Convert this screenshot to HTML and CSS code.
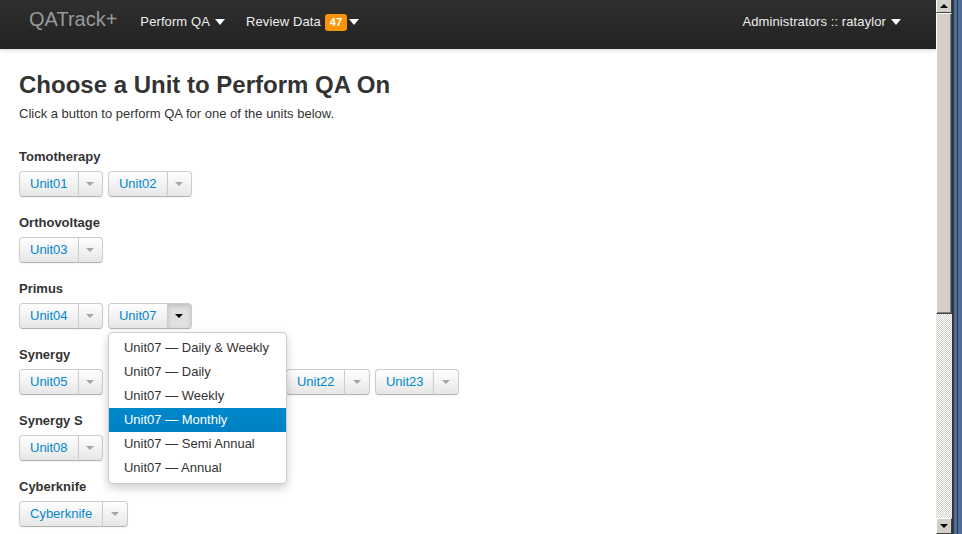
FILE: index.html
```html
<!DOCTYPE html>
<html>
<head>
<meta charset="utf-8">
<title>QATrack+</title>
<link rel="stylesheet" href="styles.css">
</head>
<body>
<div class="window">
  <div class="page">
    <div class="navbar">
      <span class="brand">QATrack+</span>
      <span class="nav-item">Perform QA <span class="nav-caret"></span></span>
      <span class="nav-item">Review Data <span class="badge">47</span><span class="nav-caret tight"></span></span>
      <span class="nav-spacer"></span>
      <span class="nav-item">Administrators :: rataylor <span class="nav-caret"></span></span>
    </div>
    <div class="content">
      <h1>Choose a Unit to Perform QA On</h1>
      <p class="lead">Click a button to perform QA for one of the units below.</p>

      <div class="unit-type">
        <div class="type-label">Tomotherapy</div>
        <div class="btn-row">
          <div class="btn-group"><a class="btn">Unit01</a><a class="btn toggle"><span class="caret"></span></a></div>
          <div class="btn-group"><a class="btn">Unit02</a><a class="btn toggle"><span class="caret"></span></a></div>
        </div>
      </div>

      <div class="unit-type">
        <div class="type-label">Orthovoltage</div>
        <div class="btn-row">
          <div class="btn-group"><a class="btn">Unit03</a><a class="btn toggle"><span class="caret"></span></a></div>
        </div>
      </div>

      <div class="unit-type">
        <div class="type-label">Primus</div>
        <div class="btn-row">
          <div class="btn-group"><a class="btn">Unit04</a><a class="btn toggle"><span class="caret"></span></a></div>
          <div class="btn-group open"><a class="btn">Unit07</a><a class="btn toggle active"><span class="caret dark"></span></a>
            <ul class="dropdown-menu">
              <li>Unit07 — Daily &amp; Weekly</li>
              <li>Unit07 — Daily</li>
              <li>Unit07 — Weekly</li>
              <li class="selected">Unit07 — Monthly</li>
              <li>Unit07 — Semi Annual</li>
              <li>Unit07 — Annual</li>
            </ul>
          </div>
        </div>
      </div>

      <div class="unit-type">
        <div class="type-label">Synergy</div>
        <div class="btn-row">
          <div class="btn-group"><a class="btn">Unit05</a><a class="btn toggle"><span class="caret"></span></a></div>
          <div class="btn-group covered"><a class="btn">Unit06</a><a class="btn toggle"><span class="caret"></span></a></div>
          <div class="btn-group covered"><a class="btn">Unit21</a><a class="btn toggle"><span class="caret"></span></a></div>
          <div class="btn-group"><a class="btn">Unit22</a><a class="btn toggle"><span class="caret"></span></a></div>
          <div class="btn-group"><a class="btn">Unit23</a><a class="btn toggle"><span class="caret"></span></a></div>
        </div>
      </div>

      <div class="unit-type">
        <div class="type-label">Synergy S</div>
        <div class="btn-row">
          <div class="btn-group"><a class="btn">Unit08</a><a class="btn toggle"><span class="caret"></span></a></div>
        </div>
      </div>

      <div class="unit-type">
        <div class="type-label">Cyberknife</div>
        <div class="btn-row">
          <div class="btn-group"><a class="btn">Cyberknife</a><a class="btn toggle"><span class="caret"></span></a></div>
        </div>
      </div>
    </div>
  </div>
  <div class="scrollbar">
    <div class="sb-btn sb-up"><span class="sb-arrow up"></span></div>
    <div class="sb-thumb"></div>
    <div class="sb-track"></div>
    <div class="sb-btn sb-down"><span class="sb-arrow down"></span></div>
  </div>
  <div class="frame"></div>
</div>
</body>
</html>
```
FILE: styles.css
```css
html, body {
  margin: 0;
  padding: 0;
  height: 534px;
  overflow: hidden;
  background: #fff;
}

body {
  font-family: "Liberation Sans", Arial, sans-serif;
  font-size: 13px;
  color: #333;
}

.window {
  display: flex;
  height: 534px;
}

.page {
  width: 936px;
  height: 534px;
  overflow: hidden;
  background: #fff;
  flex: none;
}

/* navbar */
.navbar {
  height: 49px;
  box-sizing: border-box;
  padding: 9px 35px 0 29px;
  display: flex;
  align-items: baseline;
  background: linear-gradient(#2f2f2f, #222);
  box-shadow: 0 1px 4px rgba(0, 0, 0, 0.18);
  position: relative;
}

.brand {
  font-size: 20px;
  line-height: 20px;
  color: #999;
  margin-right: 23px;
}

.nav-item {
  font-size: 13px;
  line-height: 20px;
  color: #eee;
  margin-right: 21px;
  display: inline-flex;
  align-items: center;
  letter-spacing: 0.1px;
}

.nav-item:last-child {
  margin-right: 0;
}

.nav-spacer {
  flex: 1;
}

.nav-caret {
  display: inline-block;
  width: 0;
  height: 0;
  border-top: 6px solid #fff;
  border-left: 5px solid transparent;
  border-right: 5px solid transparent;
  margin-left: 5px;
}

.nav-caret.tight {
  margin-left: 2px;
}

.badge {
  display: inline-block;
  background: #f89406;
  color: #fff;
  font-weight: bold;
  font-size: 11px;
  line-height: 17px;
  padding: 0 5px;
  border-radius: 3px;
  margin-left: 4px;
  letter-spacing: 0;
}

/* content */
.content {
  padding: 21px 19px 0 19px;
}

h1 {
  margin: 0;
  font-size: 24px;
  line-height: 30px;
  font-weight: bold;
  color: #333;
}

.lead {
  margin: 5px 0 0 0;
  line-height: 18px;
}

.unit-type {
  margin-top: 24px;
}

.unit-type + .unit-type {
  margin-top: 16px;
}

.type-label {
  font-weight: bold;
  line-height: 20px;
  margin-bottom: 4px;
}

.btn-row {
  display: flex;
  gap: 5px;
}

.btn-group {
  display: flex;
  position: relative;
}

.btn-group.covered {
  visibility: hidden;
}

.btn {
  display: block;
  box-sizing: border-box;
  height: 26px;
  padding: 3px 10px;
  line-height: 18px;
  font-size: 13px;
  color: #0088cc;
  background: linear-gradient(#fff, #e6e6e6);
  border: 1px solid #ccc;
  border-bottom-color: #b3b3b3;
  border-radius: 4px 0 0 4px;
  box-shadow: inset 0 1px 0 rgba(255, 255, 255, 0.2), 0 1px 2px rgba(0, 0, 0, 0.05);
}

.btn.toggle {
  width: 25.4px;
  padding: 3px 0;
  margin-left: -1px;
  border-radius: 0 4px 4px 0;
  display: flex;
  align-items: center;
  justify-content: center;
}

.btn.toggle.active {
  background: #e0e0e0;
  box-shadow: inset 0 2px 4px rgba(0, 0, 0, 0.15), 0 1px 2px rgba(0, 0, 0, 0.05);
}

.caret {
  display: block;
  width: 0;
  height: 0;
  border-top: 4px solid #a6a6a6;
  border-left: 4px solid transparent;
  border-right: 4px solid transparent;
}

.caret.dark {
  border-top-color: #000;
}

/* dropdown */
.dropdown-menu {
  position: absolute;
  top: 100%;
  left: 0;
  z-index: 10;
  margin: 3px 0 0 0;
  padding: 3px 0;
  list-style: none;
  width: 179px;
  box-sizing: border-box;
  background: #fff;
  border: 1px solid rgba(0, 0, 0, 0.2);
  border-radius: 5px;
  box-shadow: 0 4px 10px rgba(0, 0, 0, 0.2);
}

.dropdown-menu li {
  padding: 3px 15px;
  line-height: 18px;
  color: #333;
  white-space: nowrap;
}

.dropdown-menu li.selected {
  color: #fff;
  background: linear-gradient(#0088cc, #0080c4);
}

/* scrollbar chrome */
.scrollbar {
  width: 16px;
  height: 534px;
  flex: none;
  display: flex;
  flex-direction: column;
  background: #d4d0c8;
}

.sb-btn {
  box-sizing: border-box;
  background: #d4d0c8;
  border-left: 1px solid #fff;
  border-top: 1px solid #fff;
  border-right: 1px solid #404040;
  border-bottom: 1px solid #404040;
  display: flex;
  align-items: center;
  justify-content: center;
}

.sb-up {
  height: 13px;
  border-top: 0;
}

.sb-down {
  height: 16px;
}

.sb-arrow {
  width: 0;
  height: 0;
  border-left: 4px solid transparent;
  border-right: 4px solid transparent;
}

.sb-arrow.up {
  border-bottom: 4px solid #000;
}

.sb-arrow.down {
  border-top: 4px solid #000;
}

.sb-thumb {
  height: 301px;
  box-sizing: border-box;
  background: #d4d0c8;
  border-left: 1px solid #fff;
  border-top: 1px solid #fff;
  border-right: 1px solid #404040;
  border-bottom: 1px solid #404040;
  box-shadow: inset -1px -1px 0 #808080;
}

.sb-track {
  flex: 1;
  background: repeating-conic-gradient(#d4d0c8 0 25%, #fff 0 50%) 0 0 / 2px 2px;
}

.frame {
  width: 10px;
  height: 534px;
  flex: none;
  background: linear-gradient(to right,
    #2a3546 0, #2a3546 2px,
    #4f6d96 2px, #4f6d96 5px,
    #2a3546 5px, #2a3546 6px,
    #4f6d96 6px, #4f6d96 10px);
}
```
